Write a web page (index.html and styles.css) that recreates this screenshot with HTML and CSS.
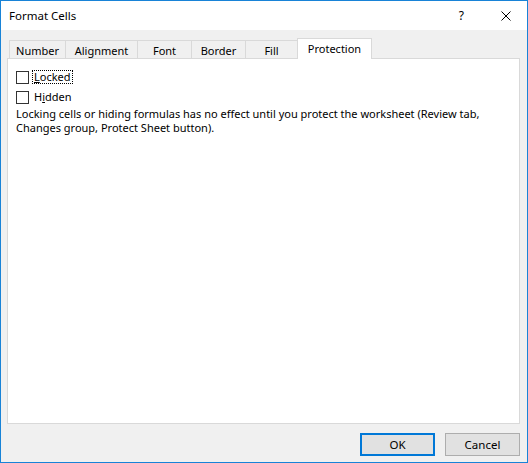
FILE: index.html
```html
<!DOCTYPE html>
<html>
<head>
<meta charset="utf-8">
<link rel="stylesheet" href="styles.css">
</head>
<body>
<div class="window">
  <div class="titlebar">
    <span class="title">Format Cells</span>
    <span class="help">?</span>
    <svg class="close" width="10" height="10" viewBox="0 0 10 10"><path d="M0.5 0.5 L9.5 9.5 M9.5 0.5 L0.5 9.5" stroke="#000" stroke-width="1" fill="none"/></svg>
  </div>
  <div class="content">
    <div class="tabs">
      <div class="tab tab-number">Number</div>
      <div class="tab tab-align">Alignment</div>
      <div class="tab tab-font">Font</div>
      <div class="tab tab-border">Border</div>
      <div class="tab tab-fill">Fill</div>
      <div class="tab tab-prot active">Protection</div>
    </div>
    <div class="panel">
      <label class="check">
        <span class="box"></span>
        <span class="label focus"><u>L</u>ocked</span>
      </label>
      <label class="check">
        <span class="box"></span>
        <span class="label">H<u>i</u>dden</span>
      </label>
      <p class="note">Locking cells or hiding formulas has no effect until you protect the worksheet (Review tab,<br>Changes group, Protect Sheet button).</p>
    </div>
    <div class="buttons">
      <button class="btn btn-default">OK</button>
      <button class="btn">Cancel</button>
    </div>
  </div>
</div>
</body>
</html>
```

FILE: styles.css
```css
* { box-sizing: border-box; }
html, body { margin: 0; padding: 0; }
body {
  font-family: "Noto Sans", "Open Sans", sans-serif;
  font-size: 11px;
  color: #000;
}
.window {
  width: 528px;
  height: 463px;
  border: 1px solid #1883d7;
  background: #f0f0f0;
  display: flex;
  flex-direction: column;
}
.titlebar {
  height: 29px;
  background: #fff;
  display: flex;
  align-items: center;
  padding-left: 8px;
}
.title {
  flex: 1;
  font-size: 11.5px;
}
.help {
  font-size: 12px;
  margin-right: 37px;
}
.close {
  margin-right: 16px;
}
.content {
  flex: 1;
  display: flex;
  flex-direction: column;
  padding: 8px 7px 6px 6px;
}
.tabs {
  display: flex;
  height: 20px;
  padding-left: 2px;
  align-items: flex-end;
  position: relative;
  z-index: 1;
}
.tab {
  height: 18px;
  border: 1px solid #d9d9d9;
  border-bottom: none;
  margin-left: -1px;
  display: flex;
  align-items: center;
  justify-content: center;
  line-height: 1;
  padding-top: 1px;
}
.tab:first-child { margin-left: 0; }
.tab-number { width: 57px; }
.tab-align { width: 73px; }
.tab-font { width: 55px; }
.tab-border { width: 55px; }
.tab-fill { width: 53px; }
.tab-prot { width: 75px; }
.tab.active {
  height: 21px;
  background: #fff;
  margin-bottom: -1px;
  padding-top: 0;
  padding-bottom: 2px;
}
.panel {
  flex: 1;
  background: #fff;
  border: 1px solid #d9d9d9;
  padding: 8px 8px 0 8px;
}
.check {
  display: flex;
  align-items: center;
  height: 20px;
}
.box {
  width: 13px;
  height: 13px;
  border: 1px solid #333;
  background: #fff;
  margin-right: 3px;
}
.label {
  padding: 0 1px;
  line-height: 12px;
  border: 1px dotted transparent;
}
.label.focus {
  border-color: #000;
}
.note {
  margin: 0;
  line-height: 14px;
}
.buttons {
  display: flex;
  justify-content: flex-end;
  gap: 10px;
  padding-top: 9px;
}
.btn {
  width: 75px;
  height: 23px;
  font-family: inherit;
  font-size: 11.5px;
  background: #e1e1e1;
  border: 1px solid #adadad;
  padding: 0;
  color: #000;
}
.btn-default {
  border: 2px solid #0078d7;
}
```
